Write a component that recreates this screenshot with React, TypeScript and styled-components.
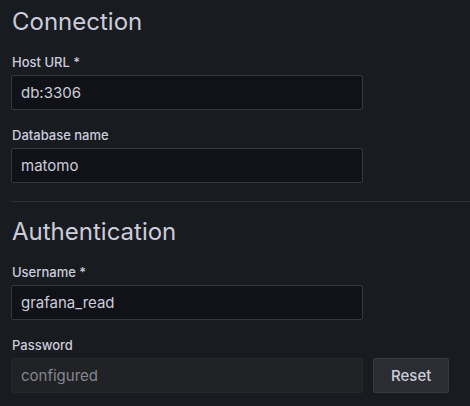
import { createGlobalStyle, styled } from 'styled-components';

const GlobalStyle = createGlobalStyle`
  html, body {
    margin: 0;
    background-color: #181b1f;
  }

  body {
    font-family: Inter, 'Noto Sans', sans-serif;
    color: #ccccdc;
    -webkit-font-smoothing: antialiased;
  }
`;

const fields = {
  connection: [
    { label: 'Host URL *', value: 'db:3306' },
    { label: 'Database name', value: 'matomo' },
  ],
  authentication: [{ label: 'Username *', value: 'grafana_read' }],
};

export default function App() {
  return (
    <>
      <GlobalStyle />
      <Page>
        <Section>
          <SectionTitle>Connection</SectionTitle>
          {fields.connection.map((field) => (
            <Field key={field.label}>
              <Label>{field.label}</Label>
              <Input defaultValue={field.value} />
            </Field>
          ))}
        </Section>

        <Divider />

        <Section>
          <SectionTitle>Authentication</SectionTitle>
          {fields.authentication.map((field) => (
            <Field key={field.label}>
              <Label>{field.label}</Label>
              <Input defaultValue={field.value} />
            </Field>
          ))}
          <Field>
            <Label>Password</Label>
            <InlineRow>
              <Input disabled value="configured" readOnly />
              <Button type="button">Reset</Button>
            </InlineRow>
          </Field>
        </Section>
      </Page>
    </>
  );
}

const Page = styled.div`
  padding: 7px 0 0 11px;
`;

const Section = styled.section`
  display: flex;
  flex-direction: column;
  gap: 17px;
`;

const SectionTitle = styled.h3`
  margin: 0;
  font-size: 24px;
  line-height: 30px;
  font-weight: 400;
  color: #ccccdc;
  padding-left: 1px;
`;

const Field = styled.div`
  display: flex;
  flex-direction: column;
`;

const Label = styled.label`
  display: block;
  font-size: 13px;
  line-height: 16px;
  font-weight: 500;
  color: #ccccdc;
  margin-bottom: 5px;
  padding-left: 1px;
`;

const InlineRow = styled.div`
  display: flex;
  align-items: center;
  gap: 10px;
`;

const Input = styled.input`
  box-sizing: border-box;
  width: 352px;
  height: 35px;
  padding: 0 9px;
  background-color: #111217;
  border: 1px solid #37383e;
  border-radius: 2px;
  font-family: inherit;
  font-size: 15px;
  color: #ccccdc;
  outline: none;

  &:disabled {
    background-color: #202226;
    border-color: #25272b;
    color: #85868e;
  }
`;

const Button = styled.button`
  box-sizing: border-box;
  height: 35px;
  padding: 0 17px;
  background-color: #2b2d32;
  border: 1px solid #37393e;
  border-radius: 2px;
  font-family: inherit;
  font-size: 15px;
  font-weight: 500;
  color: #ccccdc;
  cursor: pointer;
`;

const Divider = styled.hr`
  margin: 18px 0 15px;
  border: none;
  border-top: 1px solid #2d2f34;
`;
